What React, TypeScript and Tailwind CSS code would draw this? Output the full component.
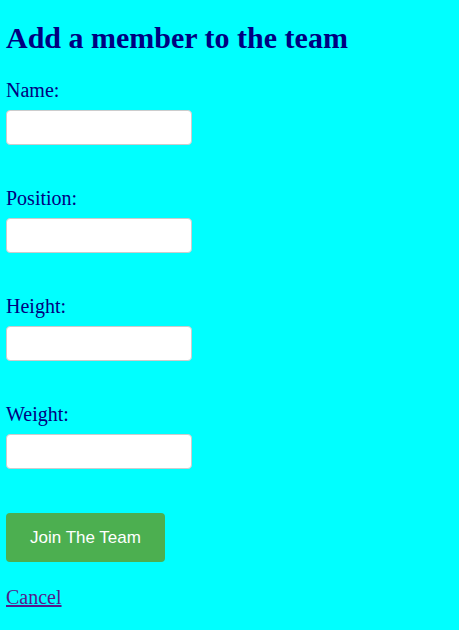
const fields = ["Name:", "Position:", "Height:", "Weight:"];

const App = () => {
  return (
    <div className="min-h-screen w-full bg-[#00ffff] px-[6px] pt-[18px] font-['Liberation_Serif',serif] text-[#000080]">
      <h1 className="text-[30px] font-bold leading-[40px]">Add a member to the team</h1>
      <form className="mt-[20px] flex flex-col">
        {fields.map((f) => (
          <div key={f} className="mb-[41px] flex flex-col">
            <label className="text-[20px] leading-[24px]">{f}</label>
            <input
              type="text"
              className="mt-[8px] h-[35px] w-[186px] rounded-[4px] border border-[#cccccc] bg-white px-2"
            />
          </div>
        ))}
        <button
          type="button"
          className="mt-[3px] h-[49px] w-[159px] rounded-[4px] bg-[#4caf50] font-['Liberation_Sans',sans-serif] text-[17px] text-white"
        >
          Join The Team
        </button>
      </form>
      <a href="#" className="mt-[23px] inline-block text-[20px] leading-[24px] text-[#551a8b] underline">
        Cancel
      </a>
    </div>
  );
};

export default App;
